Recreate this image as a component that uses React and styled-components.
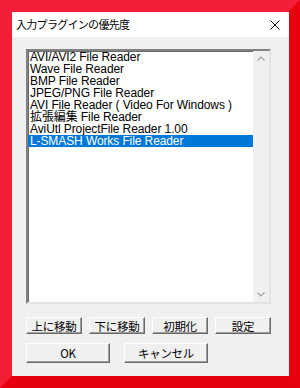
import React from "react";
import styled, { createGlobalStyle } from "styled-components";

const Global = createGlobalStyle`
  html, body { margin: 0; padding: 0; background: #e8000f; }
  * { box-sizing: border-box; }
`;

const Frame = styled.div`
  width: 300px;
  height: 388px;
  border-style: solid;
  border-width: 12px;
  border-top-color: #f51e38;
  border-left-color: #f31d36;
  border-right-color: #e9000f;
  border-bottom-color: #e4000e;
  display: flex;
`;

const Dialog = styled.div`
  flex: 1;
  display: flex;
  flex-direction: column;
  background: #f0f0f0;
  font-family: "Noto Sans CJK JP", "Liberation Sans", sans-serif;
  color: #000;
`;

const TitleBar = styled.div`
  height: 25px;
  background: #ffffff;
  display: flex;
  align-items: center;
  justify-content: space-between;
  padding: 0 8px 0 4px;
`;

const Title = styled.div`
  font-size: 11px;
  letter-spacing: -0.7px;
  line-height: 1;
`;

const CloseIcon = styled.svg`
  width: 10px;
  height: 10px;
  margin-right: 1px;
`;

const Body = styled.div`
  flex: 1;
  padding: 12px 18px 0 14px;
  display: flex;
  flex-direction: column;
`;

const ListBox = styled.div`
  height: 255px;
  display: flex;
  background: #fff;
  border-style: solid;
  border-width: 2px;
  border-top-color: #828282;
  border-left-color: #828282;
  border-right-color: #e3e3e3;
  border-bottom-color: #e3e3e3;
  box-shadow: inset 1px 1px 0 #696969;
`;

const Items = styled.div`
  flex: 1;
  display: flex;
  flex-direction: column;
`;

const Item = styled.div`
  height: 12px;
  line-height: 12px;
  font-size: 12px;
  padding-left: 2px;
  white-space: nowrap;
  letter-spacing: -0.1px;
  font-family: "Liberation Sans", "Noto Sans CJK JP", sans-serif;
  background: ${(p) => (p.$selected ? "#0078d7" : "transparent")};
  color: ${(p) => (p.$selected ? "#ffffff" : "#000000")};
`;

const ScrollBar = styled.div`
  width: 16px;
  background: #f0f0f0;
  display: flex;
  flex-direction: column;
  justify-content: space-between;
  align-items: center;
  padding: 5px 0 5px;
`;

const Arrow = styled.svg`
  width: 8px;
  height: 5px;
`;

const ButtonRow = styled.div`
  display: flex;
  gap: ${(p) => p.$gap}px;
  margin-top: ${(p) => p.$top}px;
`;

const Button = styled.div`
  width: ${(p) => p.$w}px;
  height: ${(p) => p.$h}px;
  display: flex;
  align-items: center;
  justify-content: center;
  font-size: 11.5px;
  background: #f0f0f0;
  border-style: solid;
  border-width: 1px;
  border-top-color: #ffffff;
  border-left-color: #ffffff;
  border-right-color: #696969;
  border-bottom-color: #696969;
  box-shadow: inset -1px -1px 0 #a0a0a0;
  letter-spacing: -0.3px;
`;

const items = [
  "AVI/AVI2 File Reader",
  "Wave File Reader",
  "BMP File Reader",
  "JPEG/PNG File Reader",
  "AVI File Reader ( Video For Windows )",
  "拡張編集 File Reader",
  "AviUtl ProjectFile Reader 1.00",
  "L-SMASH Works File Reader",
];

export default function App() {
  return (
    <>
      <Global />
      <Frame>
        <Dialog>
          <TitleBar>
            <Title>入力プラグインの優先度</Title>
            <CloseIcon viewBox="0 0 10 10">
              <path d="M0.5 0.5 L9.5 9.5 M9.5 0.5 L0.5 9.5" stroke="#000" strokeWidth="1" />
            </CloseIcon>
          </TitleBar>
          <Body>
            <ListBox>
              <Items>
                {items.map((t, i) => (
                  <Item key={t} $selected={i === items.length - 1}>
                    {t}
                  </Item>
                ))}
              </Items>
              <ScrollBar>
                <Arrow viewBox="0 0 8 5">
                  <path d="M0.5 4.5 L4 1 L7.5 4.5" fill="none" stroke="#a3a3a3" strokeWidth="1.2" />
                </Arrow>
                <Arrow viewBox="0 0 8 5">
                  <path d="M0.5 0.5 L4 4 L7.5 0.5" fill="none" stroke="#a3a3a3" strokeWidth="1.2" />
                </Arrow>
              </ScrollBar>
            </ListBox>
            <ButtonRow $gap={7} $top={13}>
              <Button $w={56} $h={17}>上に移動</Button>
              <Button $w={56} $h={17}>下に移動</Button>
              <Button $w={56} $h={17}>初期化</Button>
              <Button $w={56} $h={17}>設定</Button>
            </ButtonRow>
            <ButtonRow $gap={14} $top={9}>
              <Button $w={84} $h={20}>OK</Button>
              <Button $w={84} $h={20}>キャンセル</Button>
            </ButtonRow>
          </Body>
        </Dialog>
      </Frame>
    </>
  );
}
